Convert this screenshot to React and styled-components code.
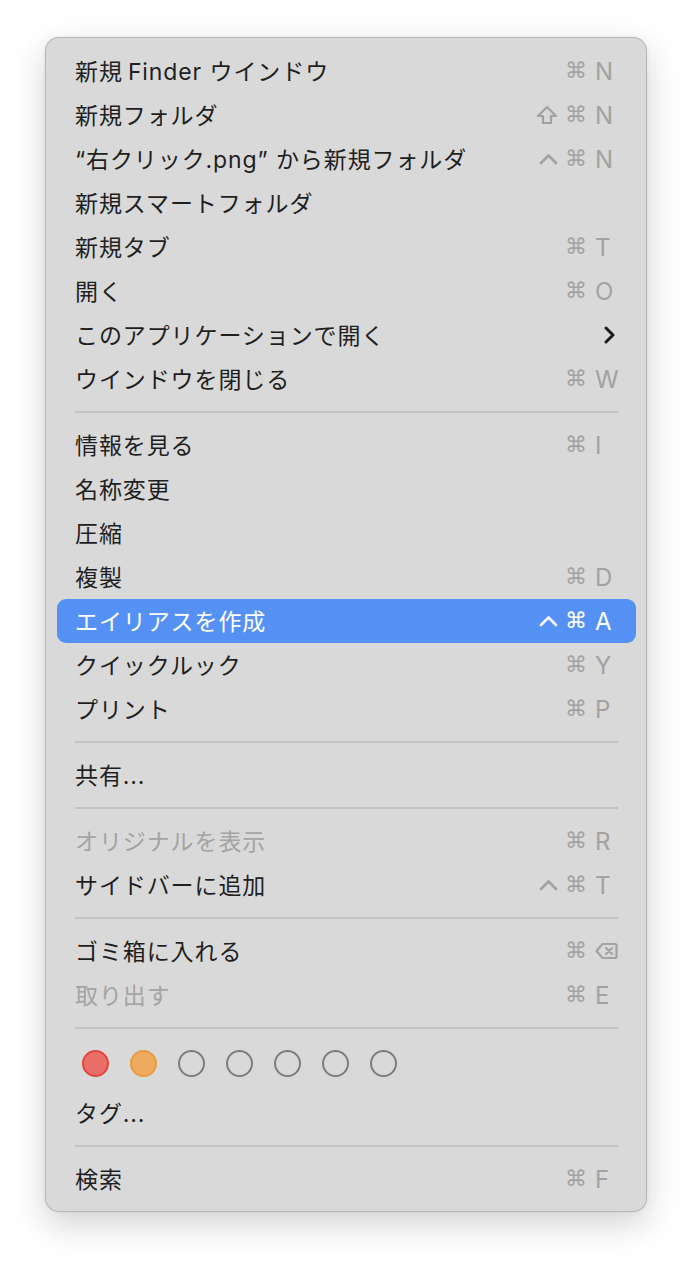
import styled, { createGlobalStyle } from "styled-components";

const Global = createGlobalStyle`
  html, body {
    margin: 0;
    background: #ffffff;
  }
  body {
    font-family: "Inter", "Noto Sans CJK JP", sans-serif;
  }
`;

const Page = styled.div`
  padding: 37px 0 54px 45px;
  width: 692px;
  min-height: 1266px;
  box-sizing: border-box;
`;

const Menu = styled.div`
  width: 602px;
  box-sizing: border-box;
  background: #d9d9d9;
  border: 1px solid rgba(0, 0, 0, 0.16);
  border-radius: 14px;
  padding: 11px 10px 10px 11px;
  box-shadow: 0 12px 34px rgba(0, 0, 0, 0.18), 0 0 4px rgba(0, 0, 0, 0.06);
`;

const Row = styled.div`
  height: 44px;
  display: flex;
  align-items: center;
  padding: 0 14px 0 18px;
  border-radius: 9px;
  background: ${(p) => (p.active ? "#5591f4" : "transparent")};
  color: ${(p) => (p.active ? "#ffffff" : p.disabled ? "#a4a4a4" : "#1f1f1f")};
`;

const Label = styled.span`
  flex: 1;
  font-size: 23px;
  letter-spacing: 0.9px;
  white-space: nowrap;
  margin-top: -2px;
`;

const Shortcut = styled.span`
  display: flex;
  align-items: center;
  color: ${(p) => (p.active ? "#ffffff" : "#a2a2a2")};
  font-size: 24px;
`;

const Mods = styled.span`
  display: flex;
  align-items: center;
  gap: 7px;
`;

const Cmd = styled.span`
  font-family: "DejaVu Sans", sans-serif;
  font-size: 22px;
  line-height: 1;
`;

const Key = styled.span`
  width: 27px;
  margin-left: 8px;
  display: flex;
  align-items: center;
  font-family: "Inter", sans-serif;
  font-size: 24px;
`;

const Arrow = styled.span`
  display: flex;
  margin-right: 5px;
`;

const Sep = styled.div`
  height: 22px;
  display: flex;
  align-items: center;
  padding: 0 18px;

  &::after {
    content: "";
    flex: 1;
    height: 2px;
    background: #c3c3c3;
  }
`;

const Tags = styled.div`
  height: 52px;
  display: flex;
  align-items: center;
  gap: 21px;
  padding: 0 0 4px 25px;
  box-sizing: border-box;
`;

const Dot = styled.span`
  width: 27px;
  height: 27px;
  box-sizing: border-box;
  border-radius: 50%;
  border: 2px solid ${(p) => p.ring};
  background: ${(p) => p.fill};
`;

const Ctrl = () => (
  <svg width="19" height="12" viewBox="0 0 19 12">
    <polyline points="2,10 9.5,2.5 17,10" fill="none" stroke="currentColor" strokeWidth="2.6" strokeLinejoin="round" strokeLinecap="round" />
  </svg>
);

const Shift = () => (
  <svg width="22" height="20" viewBox="0 0 22 20">
    <path d="M11 2 L20 11 H15 V18 H7 V11 H2 Z" fill="none" stroke="currentColor" strokeWidth="2.2" strokeLinejoin="round" />
  </svg>
);

const Delete = () => (
  <svg width="23" height="18" viewBox="0 0 23 18">
    <path d="M7.5 2 H20 a1.5 1.5 0 0 1 1.5 1.5 V14.5 a1.5 1.5 0 0 1 -1.5 1.5 H7.5 L1.5 9 Z" fill="none" stroke="currentColor" strokeWidth="2.2" strokeLinejoin="round" />
    <path d="M11 6 L17 12 M17 6 L11 12" stroke="currentColor" strokeWidth="2.2" strokeLinecap="round" />
  </svg>
);

const Chevron = () => (
  <svg width="14" height="18" viewBox="0 0 14 18">
    <polyline points="3,2 10,9 3,16" fill="none" stroke="#1c1c1c" strokeWidth="3" strokeLinecap="round" strokeLinejoin="round" />
  </svg>
);

const modIcons = { ctrl: <Ctrl />, shift: <Shift /> };

const Item = ({ label, mods = [], k, active, disabled, sub }) => (
  <Row active={active} disabled={disabled}>
    <Label>{label}</Label>
    {sub && (
      <Arrow>
        <Chevron />
      </Arrow>
    )}
    {k && (
      <Shortcut active={active}>
        <Mods>
          {mods.map((m) => (
            <span key={m} style={{ display: "flex" }}>{modIcons[m]}</span>
          ))}
          <Cmd>⌘</Cmd>
        </Mods>
        <Key>{k === "del" ? <Delete /> : k}</Key>
      </Shortcut>
    )}
  </Row>
);

const groups = [
  [
    { label: "新規\u2009Finder ウインドウ", k: "N" },
    { label: "新規フォルダ", mods: ["shift"], k: "N" },
    { label: "“右クリック.png” から新規フォルダ", mods: ["ctrl"], k: "N" },
    { label: "新規スマートフォルダ" },
    { label: "新規タブ", k: "T" },
    { label: "開く", k: "O" },
    { label: "このアプリケーションで開く", sub: true },
    { label: "ウインドウを閉じる", k: "W" },
  ],
  [
    { label: "情報を見る", k: "I" },
    { label: "名称変更" },
    { label: "圧縮" },
    { label: "複製", k: "D" },
    { label: "エイリアスを作成", mods: ["ctrl"], k: "A", active: true },
    { label: "クイックルック", k: "Y" },
    { label: "プリント", k: "P" },
  ],
  [{ label: "共有..." }],
  [
    { label: "オリジナルを表示", k: "R", disabled: true },
    { label: "サイドバーに追加", mods: ["ctrl"], k: "T" },
  ],
  [
    { label: "ゴミ箱に入れる", k: "del" },
    { label: "取り出す", k: "E", disabled: true },
  ],
];

const tagColors = [
  { fill: "#e96e67", ring: "#e0473f" },
  { fill: "#eeaa5f", ring: "#ec9a3c" },
  { fill: "transparent", ring: "#7d7d7d" },
  { fill: "transparent", ring: "#7d7d7d" },
  { fill: "transparent", ring: "#7d7d7d" },
  { fill: "transparent", ring: "#7d7d7d" },
  { fill: "transparent", ring: "#7d7d7d" },
];

export default function App() {
  return (
    <Page>
      <Global />
      <Menu>
        {groups.map((g, gi) => (
          <div key={gi}>
            {gi > 0 && <Sep />}
            {g.map((it) => (
              <Item key={it.label} {...it} />
            ))}
          </div>
        ))}
        <Sep />
        <Tags>
          {tagColors.map((c, i) => (
            <Dot key={i} fill={c.fill} ring={c.ring} />
          ))}
        </Tags>
        <Item label="タグ..." />
        <Sep />
        <Item label="検索" k="F" />
      </Menu>
    </Page>
  );
}
